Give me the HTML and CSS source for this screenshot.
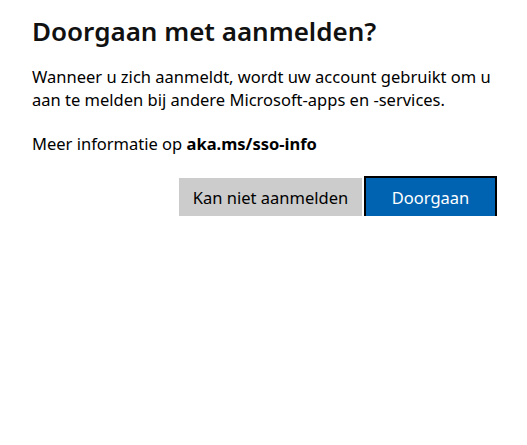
FILE: index.html
```html
<!DOCTYPE html>
<html lang="nl">
<head>
<meta charset="utf-8">
<title>Doorgaan met aanmelden?</title>
<link rel="stylesheet" href="styles.css">
</head>
<body>
<main class="dialog">
  <h1 class="title">Doorgaan met aanmelden?</h1>
  <p class="text">Wanneer u zich aanmeldt, wordt uw account gebruikt om u aan te melden bij andere Microsoft-apps en -services.</p>
  <p class="text info">Meer informatie op <strong>aka.ms/sso-info</strong></p>
  <div class="actions">
    <button class="btn btn-secondary" type="button">Kan niet aanmelden</button>
    <button class="btn btn-primary" type="button">Doorgaan</button>
  </div>
</main>
</body>
</html>
```

FILE: styles.css
```css
html, body {
  margin: 0;
  padding: 0;
  background: #ffffff;
}

body {
  font-family: "Noto Sans", "Open Sans", "Liberation Sans", sans-serif;
  color: #000000;
}

.dialog {
  padding: 13px 30px 0 32px;
  display: flex;
  flex-direction: column;
}

.title {
  margin: 0;
  font-size: 26px;
  font-weight: 600;
  line-height: 36px;
  color: #111111;
}

.text {
  margin: 16px 0 0;
  font-size: 16.5px;
  line-height: 23px;
  max-width: 465px;
}

.info {
  margin-top: 21px;
}

.info strong {
  font-weight: 700;
}

.actions {
  display: flex;
  justify-content: flex-end;
  gap: 4px;
  margin-top: 23px;
}

.btn {
  font-family: inherit;
  font-size: 16.5px;
  height: 38px;
  border: none;
  margin: 0;
  padding: 0 10px;
  color: #000000;
  cursor: pointer;
}

.btn-secondary {
  background: #cccccc;
  width: 183px;
}

.btn-primary {
  background: #0063b1;
  color: #ffffff;
  width: 129px;
  outline: 2px solid #000000;
  margin-right: 2px;
}
```
